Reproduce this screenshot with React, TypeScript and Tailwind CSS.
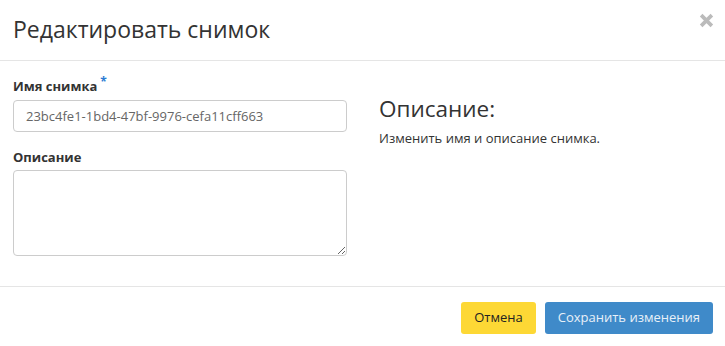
import React from 'react';

const App: React.FC = () => {
  return (
    <div className="w-[725px] h-[346px] bg-white text-[#333] overflow-hidden" style={{ fontFamily: '"Open Sans", "Liberation Sans", sans-serif' }}>
      {/* header */}
      <div className="h-[61px] border-b border-[#e5e5e5] flex items-center justify-between pl-[13px] pr-[11px]">
        <h4 className="text-[23px] leading-none text-[#333] -mt-[1px]">Редактировать снимок</h4>
        <button className="text-[#bbb] -mt-[19px]">
          <svg width="15" height="15" viewBox="0 0 14 14">
            <path d="M2 2 L12 12 M12 2 L2 12" stroke="currentColor" strokeWidth="3.4" />
          </svg>
        </button>
      </div>

      {/* body */}
      <div className="h-[225px] flex pl-[13px] pt-[16px]">
        <div className="w-[335px] flex flex-col">
          <label className="text-[13px] font-bold leading-[18px] text-[#333] flex">
            Имя снимка
            <span className="text-[#2b7bd3] text-[12px] leading-none ml-[3px] -mt-[1px]">*</span>
          </label>
          <input
            readOnly
            value="23bc4fe1-1bd4-47bf-9976-cefa11cff663"
            className="mt-[5px] h-[32px] w-[334px] border border-[#ccc] rounded-[4px] px-[12px] text-[13px] text-[#666] outline-none"
          />
          <label className="mt-[16px] text-[13px] font-bold leading-[18px] text-[#333]">Описание</label>
          <textarea className="mt-[4px] h-[86px] w-[334px] border border-[#ccc] rounded-[4px] px-[12px] py-[6px] text-[13px] outline-none" />
        </div>
        <div className="ml-[31px] pt-[19px]">
          <h3 className="text-[22.5px] leading-[26px] text-[#333]">Описание:</h3>
          <p className="mt-[7px] text-[13px] leading-[18px] text-[#333]">Изменить имя и описание снимка.</p>
        </div>
      </div>

      {/* footer */}
      <div className="border-t border-[#e5e5e5] flex justify-end gap-[9px] pr-[12px] pt-[15px]">
        <button className="h-[32px] px-[13px] rounded-[3px] bg-[#fdd835] text-[13px] text-[#222]">Отмена</button>
        <button className="h-[32px] px-[13px] rounded-[3px] bg-[#3f8ac9] text-[13px] text-[#e8f0f8]">Сохранить изменения</button>
      </div>
    </div>
  );
};

export default App;
